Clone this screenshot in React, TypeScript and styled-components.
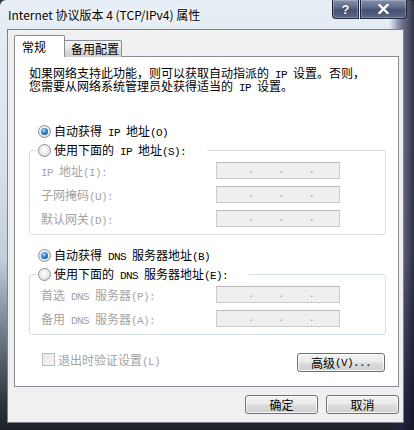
import React from "react";
import styled, { createGlobalStyle, css } from "styled-components";

const GlobalStyle = createGlobalStyle`
  html, body {
    margin: 0;
    padding: 0;
    background: #2b333b;
  }
  body {
    font-family: "Noto Sans CJK SC", "Liberation Sans", sans-serif;
    font-size: 12px;
    color: #000;
  }
`;

const Frame = styled.div`
  width: 414px;
  height: 430px;
  box-sizing: border-box;
  display: flex;
  flex-direction: column;
  padding: 0 10px 7px 7px;
  border-radius: 6px 6px 0 0;
  background:
    linear-gradient(90deg, rgba(0, 0, 0, 0) 0%, rgba(0, 0, 0, 0) 94%, rgba(40, 34, 80, 0.6) 97%, rgba(20, 20, 40, 0.85) 100%),
    linear-gradient(180deg, #e7eef5 0%, #dae4ee 35%, #c2ceda 60%, #6e7a87 78%, #2c333b 94%, #1c2127 100%);
`;

const TitleBar = styled.div`
  height: 29px;
  display: flex;
  justify-content: space-between;
  align-items: flex-start;
  margin-right: -3px;
`;

const Title = styled.div`
  padding: 6px 0 0 1px;
  font-size: 12px;
  line-height: 17px;
  text-shadow: 0 0 6px #fff, 0 0 3px #fff;
`;

const Caption = styled.div`
  display: flex;
  gap: 1px;
`;

const CaptionButton = styled.div<{ $w: number; $side: "left" | "right" }>`
  width: ${(p) => p.$w}px;
  height: 19px;
  box-sizing: border-box;
  display: flex;
  align-items: center;
  justify-content: center;
  color: #fff;
  font-family: "Liberation Sans", sans-serif;
  font-weight: bold;
  font-size: 13px;
  border: 1px solid rgba(20, 28, 45, 0.85);
  border-top: none;
  box-shadow: inset 0 0 0 1px rgba(255, 255, 255, 0.25);
  background: linear-gradient(180deg, #8290ad 0%, #5a6785 45%, #435070 55%, #5b6886 100%);
  border-radius: ${(p) => (p.$side === "left" ? "0 0 0 4px" : "0 0 4px 0")};
  text-shadow: 0 0 2px rgba(0, 0, 0, 0.6);
`;

const Client = styled.div`
  flex: 1;
  background: #f0f0f0;
  border: 1px solid rgba(30, 40, 52, 0.55);
  padding: 6px 0 0 6px;
  display: flex;
  flex-direction: column;
`;

const TabStrip = styled.div`
  height: 21px;
  display: flex;
  align-items: flex-end;
  margin-bottom: -1px;
  position: relative;
  z-index: 1;
`;

const Tab = styled.div<{ $active?: boolean; $w: number }>`
  width: ${(p) => p.$w}px;
  box-sizing: border-box;
  border: 1px solid #898c95;
  border-radius: 2px 2px 0 0;
  font-size: 12px;
  ${(p) =>
    p.$active
      ? css`
          height: 22px;
          background: #fff;
          border-bottom: none;
          padding: 2px 0 0 7px;
          line-height: 17px;
        `
      : css`
          height: 17px;
          margin-left: -1px;
          border-bottom: none;
          background: linear-gradient(180deg, #f3f3f3 0%, #ebebeb 50%, #dddddd 51%, #cfcfcf 100%);
          padding: 0 0 0 6px;
          line-height: 16px;
        `}
`;

const Panel = styled.div`
  width: 385px;
  height: 331px;
  box-sizing: border-box;
  border: 1px solid #898c95;
  background: #fff;
  padding: 9px 0 0 14px;
  display: flex;
  flex-direction: column;
`;

const Intro = styled.div`
  line-height: 13px;
  white-space: nowrap;
`;

const Latin = styled.span`
  font-family: "Liberation Mono", monospace;
  font-size: 11px;
  letter-spacing: -0.6px;
  line-height: 0;
  white-space: pre;
`;

const Txt: React.FC<{ children: string }> = ({ children }) => (
  <>
    {children
      .split(/([\x20-\x7e]+)/)
      .filter(Boolean)
      .map((part, i) =>
        /^[\x20-\x7e]+$/.test(part) ? (
          <Latin key={i}>{part}</Latin>
        ) : (
          <React.Fragment key={i}>{part}</React.Fragment>
        )
      )}
  </>
);

const RadioRow = styled.div<{ $mt?: number }>`
  display: flex;
  align-items: center;
  gap: 3px;
  height: 14px;
  line-height: 14px;
  margin: ${(p) => p.$mt ?? 0}px 0 0 9px;
`;

const RadioMark = styled.span<{ $checked?: boolean }>`
  width: 13px;
  height: 13px;
  flex: none;
  box-sizing: border-box;
  border-radius: 50%;
  border: 1px solid #8b9097;
  background: radial-gradient(circle at 45% 40%, #ffffff 0%, #eeeeee 45%, #cdd0d3 100%);
  display: flex;
  align-items: center;
  justify-content: center;
  ${(p) =>
    p.$checked &&
    css`
      &::after {
        content: "";
        width: 7px;
        height: 7px;
        border-radius: 50%;
        background: radial-gradient(circle at 40% 35%, #b7e0fb 0%, #3d8ad0 40%, #1a4f86 80%, #123a63 100%);
      }
    `}
`;

const Group = styled.fieldset`
  margin: 5px 0 0;
  padding: 0;
  width: 357px;
  box-sizing: border-box;
  border: 1px solid #d5dfe5;
  border-radius: 3px;
  min-width: 0;
`;

const Legend = styled.legend<{ $pr: number }>`
  margin-left: 8px;
  padding: 0 ${(p) => p.$pr}px 0 0;
  height: 14px;
  line-height: 14px;
  display: flex;
  align-items: center;
  gap: 3px;
  white-space: nowrap;
`;

const Rows = styled.div`
  display: flex;
  flex-direction: column;
  gap: 7px;
  padding: 5px 0 7px 11px;
`;

const FieldRow = styled.div`
  display: grid;
  grid-template-columns: 175px 124px;
  height: 17px;
  align-items: center;
`;

const Label = styled.span<{ $disabled?: boolean }>`
  color: ${(p) => (p.$disabled ? "#a3a3a3" : "#000")};
  white-space: nowrap;
  line-height: 14px;
`;

const IpField = styled.div`
  height: 17px;
  box-sizing: border-box;
  border: 1px solid #cbcbcb;
  border-top-color: #b9b9b9;
  background: #efefef;
  display: flex;
  padding-left: 31px;
`;

const Sep = styled.span`
  width: 31px;
  font-family: "Liberation Mono", monospace;
  font-size: 10px;
  line-height: 15px;
  color: #9c9c9c;
`;

const Footer = styled.div`
  display: flex;
  justify-content: space-between;
  align-items: flex-start;
  margin: 18px 13px 0 13px;
`;

const CheckRow = styled.div`
  display: flex;
  align-items: center;
  gap: 3px;
  height: 13px;
  line-height: 13px;
`;

const CheckBox = styled.span`
  width: 13px;
  height: 13px;
  box-sizing: border-box;
  border: 1px solid #bcbcbc;
  background: linear-gradient(135deg, #e6e6e6 0%, #f6f6f6 100%);
`;

const Button = styled.div<{ $w: number }>`
  width: ${(p) => p.$w}px;
  height: 19px;
  box-sizing: border-box;
  border: 1px solid #707070;
  border-radius: 3px;
  box-shadow: inset 0 0 0 1px rgba(255, 255, 255, 0.8);
  background: linear-gradient(180deg, #f2f2f2 0%, #ebebeb 48%, #dddddd 52%, #cfcfcf 100%);
  display: flex;
  align-items: center;
  justify-content: center;
  line-height: 15px;
  white-space: nowrap;
`;

const ButtonBar = styled.div`
  width: 385px;
  display: flex;
  justify-content: flex-end;
  gap: 8px;
  margin-top: 8px;
`;

const IpRow: React.FC<{ label: string }> = ({ label }) => (
  <FieldRow>
    <Label $disabled>
      <Txt>{label}</Txt>
    </Label>
    <IpField>
      <Sep>.</Sep>
      <Sep>.</Sep>
      <Sep>.</Sep>
    </IpField>
  </FieldRow>
);

export default function App() {
  return (
    <>
      <GlobalStyle />
      <Frame>
        <TitleBar>
          <Title>Internet 协议版本 4 (TCP/IPv4) 属性</Title>
          <Caption>
            <CaptionButton $w={27} $side="left">?</CaptionButton>
            <CaptionButton $w={47} $side="right">
              <svg width="11" height="10" viewBox="0 0 11 10">
                <path d="M1.5 1 L9.5 9 M9.5 1 L1.5 9" stroke="#fff" strokeWidth="2.4" strokeLinecap="square" />
              </svg>
            </CaptionButton>
          </Caption>
        </TitleBar>
        <Client>
          <TabStrip>
            <Tab $active $w={51}>常规</Tab>
            <Tab $w={58}>备用配置</Tab>
          </TabStrip>
          <Panel>
            <Intro>
              <div>
                <Txt>如果网络支持此功能，则可以获取自动指派的 IP 设置。否则，</Txt>
              </div>
              <div>
                <Txt>您需要从网络系统管理员处获得适当的 IP 设置。</Txt>
              </div>
            </Intro>

            <RadioRow $mt={32}>
              <RadioMark $checked />
              <Label>
                <Txt>自动获得 IP 地址(O)</Txt>
              </Label>
            </RadioRow>
            <Group>
              <Legend $pr={21}>
                <RadioMark />
                <Label>
                  <Txt>使用下面的 IP 地址(S):</Txt>
                </Label>
              </Legend>
              <Rows>
                <IpRow label="IP 地址(I):" />
                <IpRow label="子网掩码(U):" />
                <IpRow label="默认网关(D):" />
              </Rows>
            </Group>

            <RadioRow $mt={13}>
              <RadioMark $checked />
              <Label>
                <Txt>自动获得 DNS 服务器地址(B)</Txt>
              </Label>
            </RadioRow>
            <Group>
              <Legend $pr={21}>
                <RadioMark />
                <Label>
                  <Txt>使用下面的 DNS 服务器地址(E):</Txt>
                </Label>
              </Legend>
              <Rows>
                <IpRow label="首选 DNS 服务器(P):" />
                <IpRow label="备用 DNS 服务器(A):" />
              </Rows>
            </Group>

            <Footer>
              <CheckRow>
                <CheckBox />
                <Label $disabled>
                  <Txt>退出时验证设置(L)</Txt>
                </Label>
              </CheckRow>
              <Button $w={88}>
                <Txt>高级(V)...</Txt>
              </Button>
            </Footer>
          </Panel>
          <ButtonBar>
            <Button $w={73}>确定</Button>
            <Button $w={73}>取消</Button>
          </ButtonBar>
        </Client>
      </Frame>
    </>
  );
}
